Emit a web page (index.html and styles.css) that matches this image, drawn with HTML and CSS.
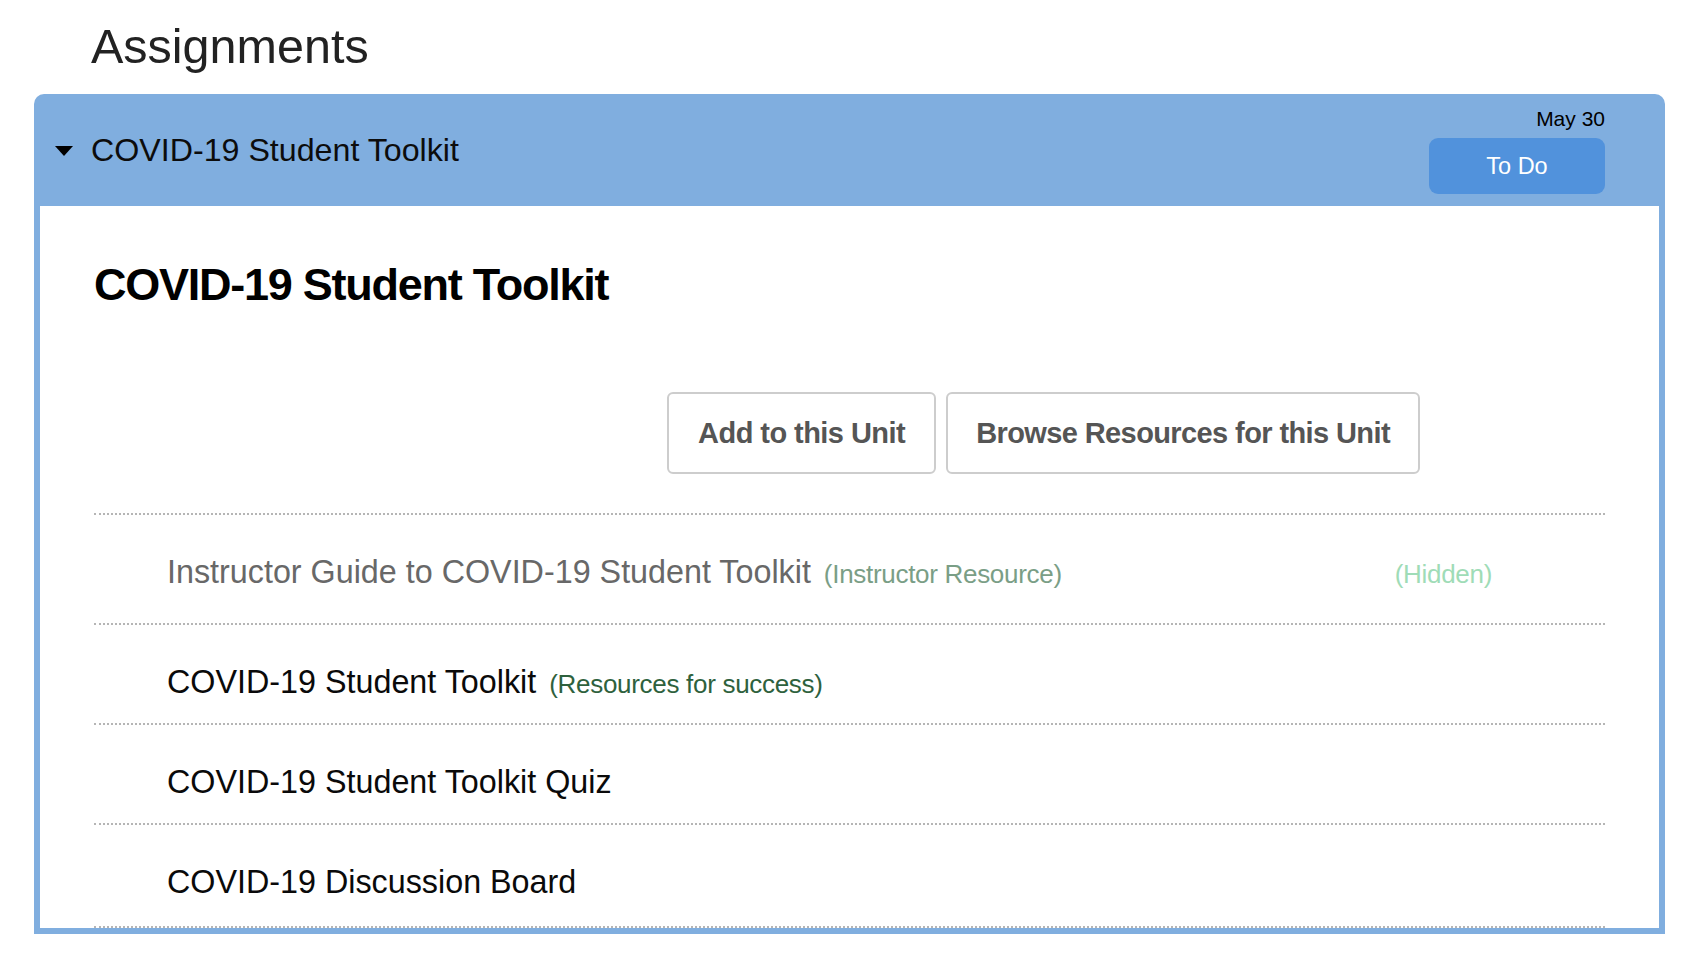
FILE: index.html
```html
<!DOCTYPE html>
<html lang="en">
<head>
<meta charset="utf-8">
<title>Assignments</title>
<link rel="stylesheet" href="styles.css">
</head>
<body>
<div class="page">
  <h1 class="page-title">Assignments</h1>
  <section class="unit">
    <header class="unit-head">
      <span class="caret"></span>
      <span class="unit-name">COVID-19 Student Toolkit</span>
      <div class="unit-meta">
        <span class="due">May 30</span>
        <span class="status">To Do</span>
      </div>
    </header>
    <div class="unit-body">
      <h2 class="unit-title">COVID-19 Student Toolkit</h2>
      <div class="actions">
        <button class="btn btn-add">Add to this Unit</button>
        <button class="btn btn-browse">Browse Resources for this Unit</button>
      </div>
      <ul class="items">
        <li class="item item-first">
          <span class="item-name muted">Instructor Guide to COVID-19 Student Toolkit</span>
          <span class="tag tag-instructor">(Instructor Resource)</span>
          <span class="hidden-flag">(Hidden)</span>
        </li>
        <li class="item">
          <span class="item-name">COVID-19 Student Toolkit</span>
          <span class="tag tag-success">(Resources for success)</span>
        </li>
        <li class="item">
          <span class="item-name">COVID-19 Student Toolkit Quiz</span>
        </li>
        <li class="item item-last">
          <span class="item-name">COVID-19 Discussion Board</span>
        </li>
      </ul>
    </div>
  </section>
</div>
</body>
</html>
```
FILE: styles.css
```css
* { box-sizing: border-box; }

html, body {
  margin: 0;
  padding: 0;
  background: #ffffff;
}

body {
  font-family: "Liberation Sans", Arial, Helvetica, sans-serif;
  color: #111;
  height: 953px;
  overflow: hidden;
}

.page {
  padding: 0 24px 0 34px;
}

.page-title {
  margin: 18px 0 20px;
  padding-left: 57px;
  font-size: 48.5px;
  line-height: 56px;
  font-weight: normal;
  color: #222;
}

.unit {
  background: #80aedf;
  border-radius: 10px 10px 0 0;
  padding: 0 6px 6px;
}

.unit-head {
  display: flex;
  align-items: center;
  height: 112px;
  margin: 0 -6px;
  padding: 0 60px 0 21px;
}

.caret {
  width: 0;
  height: 0;
  border-left: 9px solid transparent;
  border-right: 9px solid transparent;
  border-top: 10px solid #000;
  margin-right: 18px;
  margin-top: 2px;
}

.unit-name {
  font-size: 32.2px;
  color: #0c0c0c;
}

.unit-meta {
  margin-left: auto;
  display: flex;
  flex-direction: column;
  align-items: flex-end;
  gap: 7px;
  padding-top: 1px;
}

.due {
  font-size: 21px;
  line-height: 24px;
  color: #000;
}

.status {
  width: 176px;
  height: 56px;
  border-radius: 9px;
  background: #5192dc;
  color: #fff;
  font-size: 23.5px;
  display: flex;
  align-items: center;
  justify-content: center;
}

.unit-body {
  background: #fff;
  padding: 53px 54px 0;
}

.unit-title {
  margin: 0;
  font-size: 45px;
  line-height: 52px;
  font-weight: bold;
  letter-spacing: -1.25px;
  color: #000;
}

.actions {
  display: flex;
  justify-content: flex-end;
  gap: 10px;
  margin-top: 81px;
  padding-right: 185px;
}

.btn {
  height: 82px;
  padding: 0 29px;
  border: 2px solid #cdcdcd;
  border-radius: 6px;
  background: #fff;
  font-family: "Liberation Sans", Arial, Helvetica, sans-serif;
  font-size: 29px;
  font-weight: bold;
  letter-spacing: -0.55px;
  color: #555;
}

.btn-browse {
  padding: 0 28px;
  letter-spacing: -0.6px;
}

.items {
  list-style: none;
  margin: 39px 0 0;
  padding: 0;
}

.item {
  display: flex;
  align-items: baseline;
  border-top: 2px dotted #b5b5b5;
  padding: 37px 113px 21px 73px;
  font-size: 32.3px;
  line-height: 40px;
}

.item-first {
  padding-bottom: 31px;
}

.item-last {
  padding-bottom: 24px;
  border-bottom: 2px dotted #b5b5b5;
}

.item-name {
  color: #0a0a0a;
}

.item-name.muted {
  color: #686868;
}

.tag {
  margin-left: 13px;
  font-size: 26px;
  line-height: 26px;
  letter-spacing: -0.3px;
}

.tag-instructor {
  color: #7a9e86;
}

.tag-success {
  color: #2e613d;
}

.hidden-flag {
  margin-left: auto;
  font-size: 26px;
  line-height: 26px;
  letter-spacing: -0.3px;
  color: #9fdcb7;
}
```
